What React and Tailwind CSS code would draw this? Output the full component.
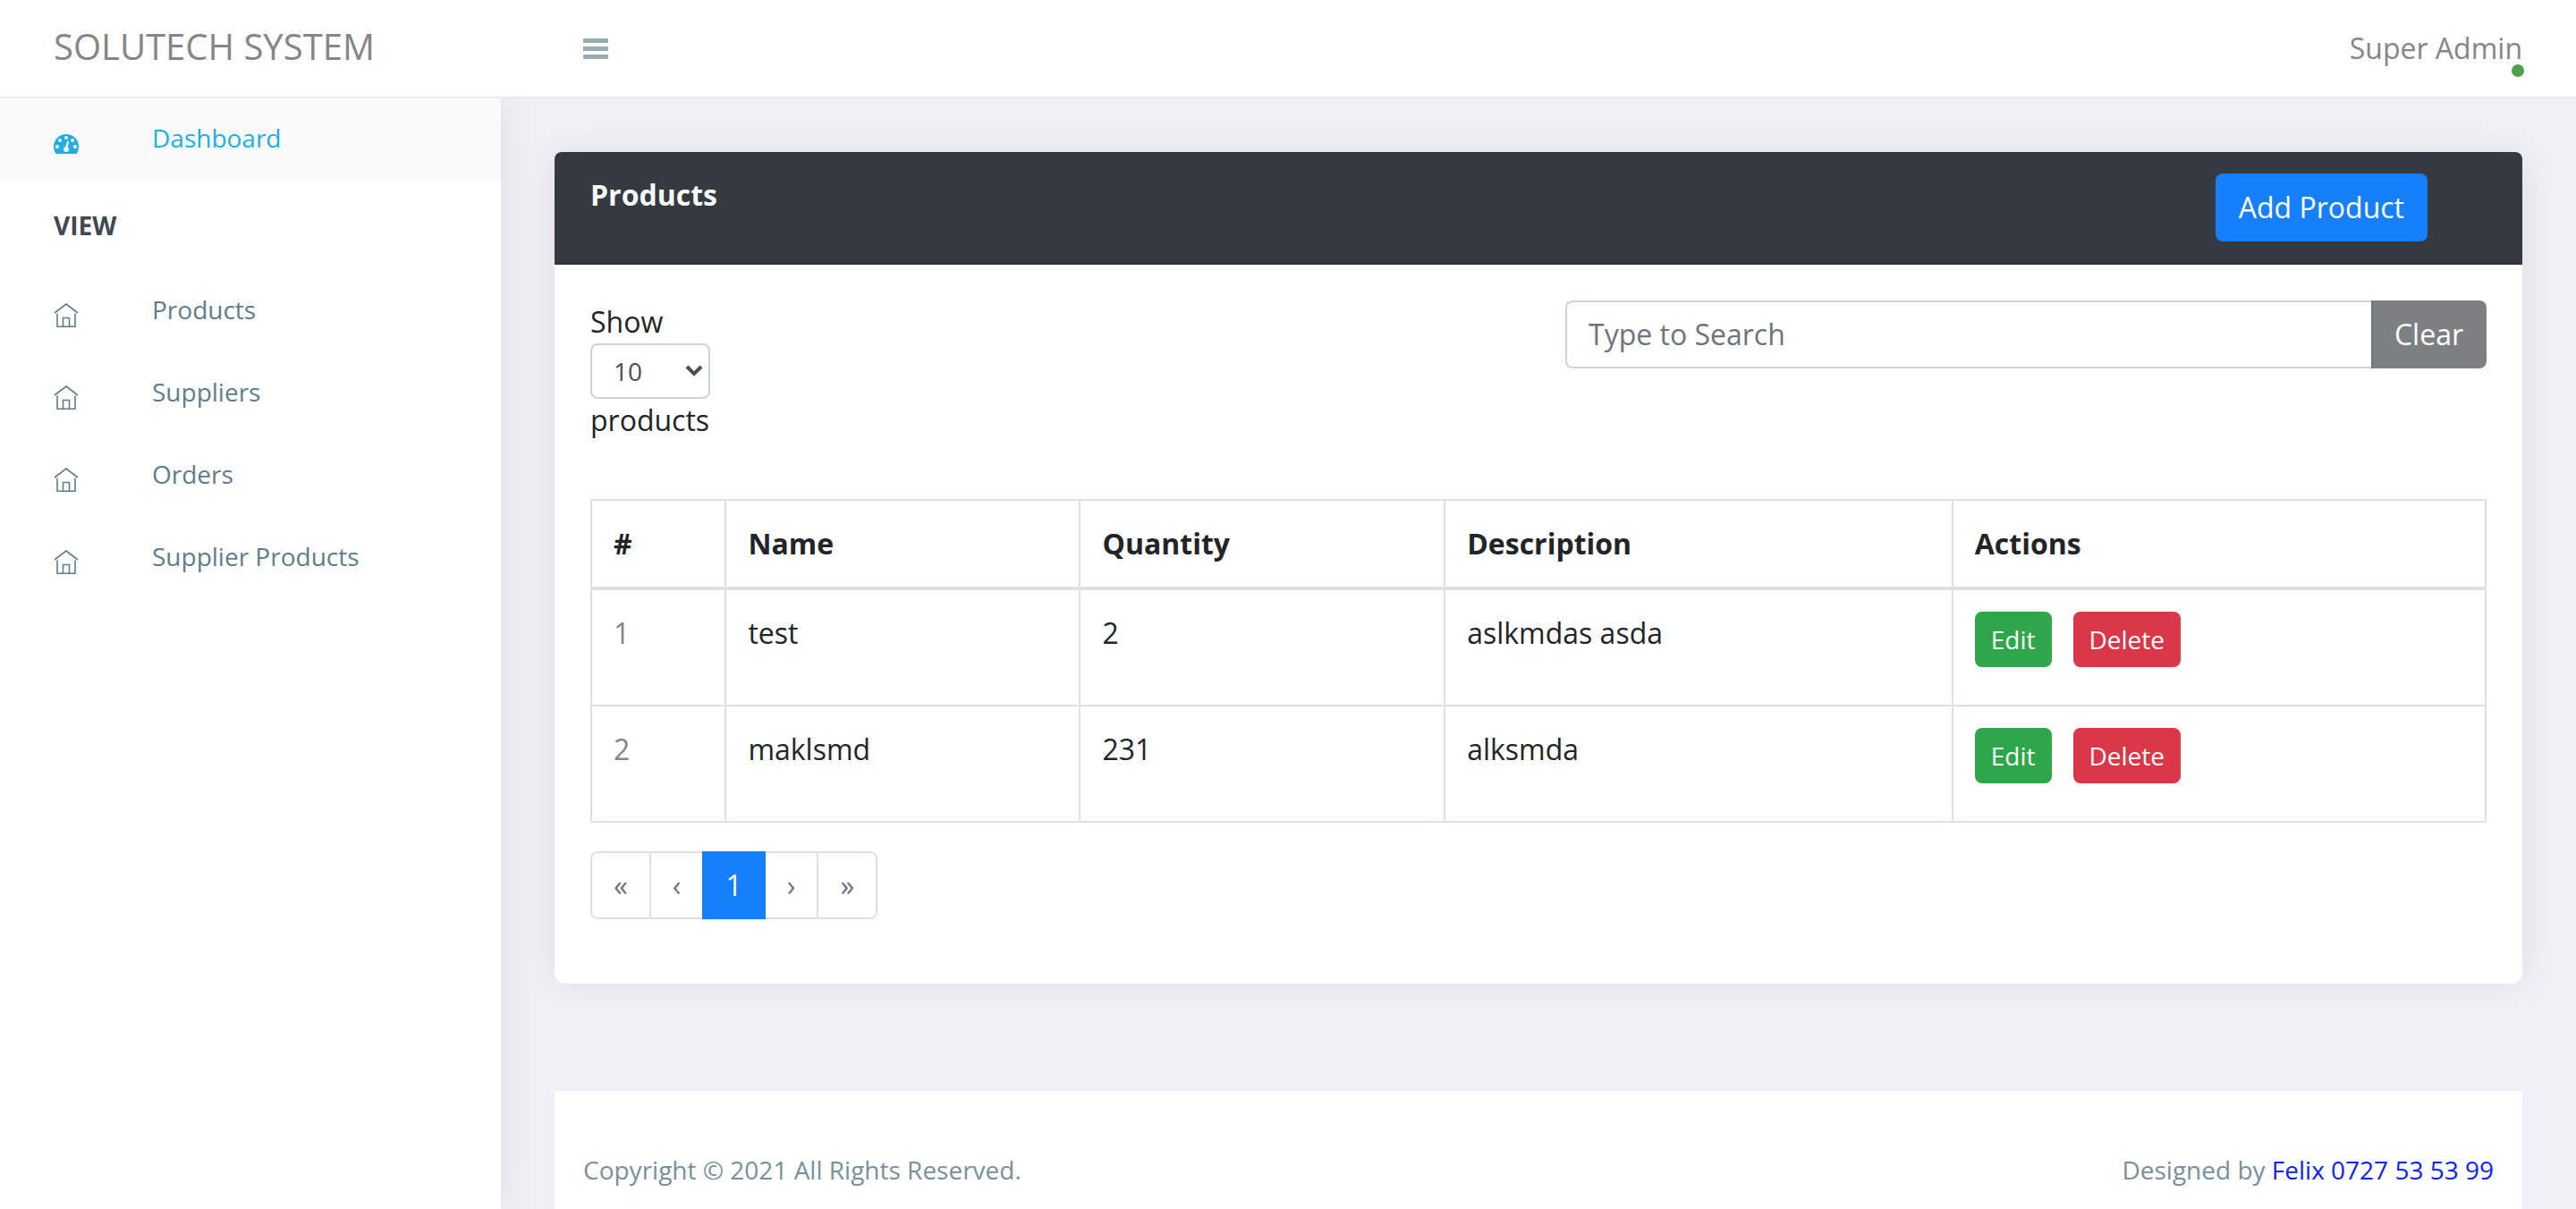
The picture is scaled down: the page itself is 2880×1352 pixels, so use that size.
const navItems = ["Products", "Suppliers", "Orders", "Supplier Products"];

const products = [
  { id: 1, name: "test", quantity: 2, description: "aslkmdas asda" },
  { id: 2, name: "maklsmd", quantity: 231, description: "alksmda" },
];

const pages = [
  { label: "First page", text: "«" },
  { label: "Previous page", text: "‹" },
  { label: "Page 1", text: "1", active: true },
  { label: "Next page", text: "›" },
  { label: "Last page", text: "»" },
];

function GaugeIcon() {
  return (
    <svg viewBox="0 0 28 22" className="h-[22px] w-7" aria-hidden="true">
      <path fill="currentColor" d="M2.5 22A14 14 0 1 1 25.500 22Z" />
      <g fill="#fafafa">
        <circle cx="14" cy="4" r="2" />
        <circle cx="7" cy="7" r="2" />
        <circle cx="21" cy="7" r="2" />
        <circle cx="4" cy="14" r="2" />
        <circle cx="24" cy="14" r="2" />
        <circle cx="14" cy="17" r="3" />
        <path d="M12.800 16L15.200 7.500L17 8L15.400 17Z" />
      </g>
    </svg>
  );
}

function HomeIcon() {
  return (
    <svg viewBox="0 0 28 28" className="size-7" fill="none" stroke="currentColor" strokeWidth="1.600" aria-hidden="true">
      <path d="M1 11L14 1L27 11" />
      <path d="M4 11.500V26.200H24V11.500" />
      <path d="M10.500 26V16.500H17.500V26" />
    </svg>
  );
}

function NavLink({ active, icon, children }) {
  return (
    <a
      href="#"
      className={
        active
          ? "flex h-[92px] items-center bg-[#fafafa] px-[60px] text-[#20aee3]"
          : "flex h-[92px] items-center px-[60px] text-[#607d8b]"
      }
    >
      <span className="w-[110px] pt-2.5">{icon}</span>
      <span className="pb-1">{children}</span>
    </a>
  );
}

export default function App() {
  return (
    <div className="flex min-h-screen flex-col bg-[#f0f1f7] font-['Open_Sans',sans-serif] text-[32px] leading-[48px] text-[#212529]">
      <header className="relative z-10 flex h-[110px] items-center border-b-2 border-[#e8eaef] bg-white pr-[60px] text-[#868686]">
        <a href="#" className="w-[652px] pb-1 pl-[60px] text-[40px]">SOLUTECH SYSTEM</a>
        <button type="button" aria-label="Toggle menu" className="flex flex-col gap-1 text-[#99abb4]">
          <span className="h-[5px] w-7 rounded-[1px] bg-current" />
          <span className="h-[5px] w-7 rounded-[1px] bg-current" />
          <span className="h-[5px] w-7 rounded-[1px] bg-current" />
        </button>
        <a href="#" className="relative ml-auto">
          Super Admin
          <span className="absolute -right-[2px] -bottom-2 size-[14px] rounded-full bg-[#4ca346]" />
        </a>
      </header>

      <div className="flex flex-1">
        <aside className="w-[560px] shrink-0 bg-white text-[28px] shadow-[2px_0_40px_rgba(0,0,0,0.08)]">
          <nav>
            <NavLink active icon={<GaugeIcon />}>Dashboard</NavLink>
            <h2 className="flex h-[100px] items-center px-[60px] font-bold text-[#414755]">VIEW</h2>
            {navItems.map((item) => (
              <NavLink key={item} icon={<HomeIcon />}>{item}</NavLink>
            ))}
          </nav>
        </aside>

        <main className="flex min-w-0 flex-1 flex-col px-[60px] pt-[60px]">
          <section className="relative rounded-xl bg-white pb-[72px] shadow-[0_0_40px_rgba(0,0,0,0.08)]">
            <div className="flex items-start justify-between rounded-t-lg border-b-2 border-[#2f323a] bg-[#343a40] py-6 pr-[106px] pl-10">
              <h1 className="font-bold text-[#f8f9fa]">Products</h1>
              <button type="button" className="h-[76px] rounded-lg bg-[#167ffc] px-[26px] text-white">Add Product</button>
            </div>

            <div className="px-10 pt-10">
              <div className="flex h-[222px] items-start justify-between">
                <div className="w-[134px]">
                  <label htmlFor="page-size" className="block">Show</label>
                  <div className="relative">
                    <select
                      id="page-size"
                      defaultValue="10"
                      className="block h-[62px] w-full appearance-none rounded-lg border-2 border-[#ced4da] bg-white pl-6 text-[28px] leading-[42px] text-[#495057]"
                    >
                      <option>10</option>
                      <option>25</option>
                      <option>50</option>
                    </select>
                    <svg viewBox="0 0 20 13" className="pointer-events-none absolute top-6 right-2 h-[13px] w-5" fill="none" stroke="#495057" strokeWidth="4" aria-hidden="true">
                      <path d="M2 2L10 10L18 2" />
                    </svg>
                  </div>
                  <span className="block">products</span>
                </div>
                <form className="flex w-[1030px]" onSubmit={(e) => e.preventDefault()}>
                  <input
                    type="text"
                    aria-label="Search products"
                    placeholder="Type to Search"
                    className="h-[76px] min-w-0 flex-1 rounded-l-lg border-2 border-r-0 border-[#ced4da] bg-white px-6 pb-0.5 placeholder:text-[#6c757d]"
                  />
                  <button type="button" className="h-[76px] rounded-r-lg border-l-2 border-[#6c757d] bg-[#7c8083] pr-[26px] pl-6 text-white">
                    Clear
                  </button>
                </form>
              </div>

              <table className="w-full table-fixed border-collapse border-2 border-[#dee2e6] text-left">
                <colgroup>
                  <col className="w-[7.1%]" />
                  <col className="w-[18.7%]" />
                  <col className="w-[19.25%]" />
                  <col className="w-[26.8%]" />
                  <col />
                </colgroup>
                <thead>
                  <tr>
                    {["#", "Name", "Quantity", "Description", "Actions"].map((h) => (
                      <th key={h} scope="col" className="border-2 border-b-4 border-[#dee2e6] p-6 font-bold">{h}</th>
                    ))}
                  </tr>
                </thead>
                <tbody>
                  {products.map((p) => (
                    <tr key={p.id} className="align-top">
                      <td className="border-2 border-[#dee2e6] p-6 text-[#868686]">{p.id}</td>
                      <td className="border-2 border-[#dee2e6] p-6">{p.name}</td>
                      <td className="border-2 border-[#dee2e6] p-6">{p.quantity}</td>
                      <td className="border-2 border-[#dee2e6] p-6">{p.description}</td>
                      <td className="border-2 border-[#dee2e6] p-6">
                        <div className="flex h-20 items-start gap-6 text-[28px] leading-[62px] text-white">
                          <button type="button" className="rounded-lg bg-[#30a64a] px-[18px]">Edit</button>
                          <button type="button" className="rounded-lg bg-[#da3849] px-[18px]">Delete</button>
                        </div>
                      </td>
                    </tr>
                  ))}
                </tbody>
              </table>

              <nav aria-label="Pagination" className="mt-8 flex">
                {pages.map((p) => (
                  <button
                    key={p.label}
                    type="button"
                    aria-label={p.label}
                    className={
                      p.active
                        ? "-ml-[2px] h-[76px] border-2 border-[#167ffc] bg-[#167ffc] px-6 text-white"
                        : "-ml-[2px] h-[76px] border-2 border-[#dee2e6] bg-white px-6 text-[#6c757d] first:ml-0 first:rounded-l-lg last:rounded-r-lg [button:nth-child(3)+&]:border-l-0 [button:nth-child(3)+&]:ml-0"
                    }
                  >
                    {p.text}
                  </button>
                ))}
              </nav>
            </div>
          </section>

          <footer className="mt-[120px] flex flex-1 items-start justify-between bg-white px-8 pt-[60px] pb-4 text-[28px] leading-[56px] text-[#78909c]">
            <p>Copyright © 2021 All Rights Reserved.</p>
            <p>
              Designed by <a href="#" className="text-[#0b1fff]">Felix 0727 53 53 99</a>
            </p>
          </footer>
        </main>
      </div>
    </div>
  );
}
